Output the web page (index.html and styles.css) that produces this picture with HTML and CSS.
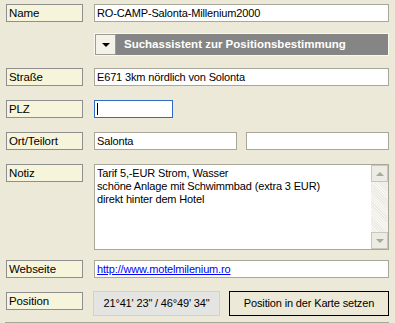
FILE: index.html
```html
<!DOCTYPE html>
<html>
<head>
<meta charset="utf-8">
<link rel="stylesheet" href="styles.css">
</head>
<body>
<div class="form">
  <div class="row r-name">
    <div class="label">Name</div>
    <div class="field">RO-CAMP-Salonta-Millenium2000</div>
  </div>
  <div class="row r-assist">
    <div class="spacer"></div>
    <div class="assist">
      <div class="assist-btn"><span class="tri"></span></div>
      <div class="assist-title">Suchassistent zur Positionsbestimmung</div>
    </div>
  </div>
  <div class="row r-street">
    <div class="label">Straße</div>
    <div class="field">E671 3km nördlich von Solonta</div>
  </div>
  <div class="row r-plz">
    <div class="label">PLZ</div>
    <div class="field plz"><span class="caret"></span></div>
  </div>
  <div class="row r-ort">
    <div class="label">Ort/Teilort</div>
    <div class="ort-fields">
      <div class="field ort1">Salonta</div>
      <div class="field ort2"></div>
    </div>
  </div>
  <div class="row r-notiz">
    <div class="label">Notiz</div>
    <div class="textarea">
      <div class="ta-text">Tarif 5,-EUR Strom, Wasser<br>schöne Anlage mit Schwimmbad (extra 3 EUR)<br>direkt hinter dem Hotel</div>
      <div class="scroll">
        <div class="sbtn"><span class="up"></span></div>
        <div class="track"></div>
        <div class="sbtn"><span class="down"></span></div>
      </div>
    </div>
  </div>
  <div class="row r-web">
    <div class="label">Webseite</div>
    <div class="field"><a class="link" href="#">http://www.motelmilenium.ro</a></div>
  </div>
  <div class="row r-pos">
    <div class="label">Position</div>
    <div class="pos-fields">
      <div class="coords">21°41' 23" / 46°49' 34"</div>
      <div class="setbtn">Position in der Karte setzen</div>
    </div>
  </div>
  <div class="bottomline"></div>
</div>
</body>
</html>
```
FILE: styles.css
```css
html, body {
  margin: 0;
  padding: 0;
}
body {
  background: #ece9d8;
  font-family: "Liberation Sans", Arial, sans-serif;
  font-size: 11px;
  letter-spacing: -0.15px;
  color: #000;
  width: 395px;
  height: 323px;
  overflow: hidden;
}
.form {
  display: flex;
  flex-direction: column;
  padding: 4px 6px 0 6px;
}
.row {
  display: grid;
  grid-template-columns: 77px 295px;
  column-gap: 11px;
  align-items: start;
}
.r-assist { margin-top: 11px; }
.r-street { margin-top: 12px; }
.r-plz { margin-top: 14px; }
.r-ort { margin-top: 14px; }
.r-notiz { margin-top: 14px; }
.r-web { margin-top: 10px; }
.r-pos { margin-top: 13px; }

.label {
  box-sizing: border-box;
  height: 18px;
  border: 1px solid #8e8e8e;
  background: #f6f5dc;
  padding: 0 2px;
  line-height: 17px;
  font-size: 11.5px;
  letter-spacing: -0.1px;
}
.r-pos .label { margin-top: 1px; }
.field {
  box-sizing: border-box;
  height: 18px;
  border: 1px solid #a8a799;
  background: #fff;
  padding: 0 2px;
  line-height: 17px;
  white-space: nowrap;
  overflow: hidden;
}
.field.plz {
  width: 79px;
  border-color: #3169c6;
  display: flex;
  align-items: center;
}
.caret {
  display: block;
  width: 1px;
  height: 12px;
  background: #000;
}
.ort-fields {
  display: flex;
  gap: 9px;
}
.ort1 { width: 143px; }
.ort2 { flex: 1; }

.assist {
  box-sizing: border-box;
  height: 23px;
  display: flex;
  border: 1px solid #f8f7f0;
  background: #f8f7f0;
}
.assist-btn {
  width: 21px;
  box-sizing: border-box;
  border: 1px solid #9d9c92;
  background: #f4f3ea;
  display: flex;
  align-items: center;
  justify-content: center;
}
.tri {
  width: 0;
  height: 0;
  border-left: 4px solid transparent;
  border-right: 4px solid transparent;
  border-top: 4px solid #000;
  margin-top: 1px;
}
.assist-title {
  flex: 1;
  background: #858585;
  color: #fff;
  font-weight: bold;
  font-size: 11.5px;
  letter-spacing: 0;
  line-height: 21px;
  padding-left: 8px;
}

.textarea {
  box-sizing: border-box;
  height: 86px;
  border: 1px solid #a8a799;
  background: #fff;
  display: flex;
}
.ta-text {
  flex: 1;
  padding: 2px 2px 0 2px;
  line-height: 13px;
}
.scroll {
  width: 17px;
  display: flex;
  flex-direction: column;
  background-image: repeating-linear-gradient(45deg, #f8f7f3 0 1px, #ecebe3 1px 2px);
}
.sbtn {
  box-sizing: border-box;
  height: 17px;
  border: 1px solid #c9c7ba;
  background: #ecebe4;
  display: flex;
  align-items: center;
  justify-content: center;
}
.track { flex: 1; }
.up {
  width: 0; height: 0;
  border-left: 4px solid transparent;
  border-right: 4px solid transparent;
  border-bottom: 4px solid #a8a799;
}
.down {
  width: 0; height: 0;
  border-left: 4px solid transparent;
  border-right: 4px solid transparent;
  border-top: 4px solid #a8a799;
}

.link {
  color: #0000ff;
  text-decoration: underline;
}

.pos-fields {
  display: flex;
  gap: 9px;
  margin-left: -1px;
}
.coords {
  box-sizing: border-box;
  width: 127px;
  height: 25px;
  background: #e4e4e2;
  border: 1px solid #d4d2c6;
  line-height: 23px;
  text-align: center;
  font-size: 11px;
}
.setbtn {
  box-sizing: border-box;
  flex: 1;
  height: 25px;
  border: 1px solid #000;
  background: #ece9d8;
  line-height: 23px;
  text-align: center;
  font-size: 11px;
}
.bottomline {
  margin-top: 6px;
  height: 1px;
  background: #a7a69a;
  margin-left: -1px;
}
```
